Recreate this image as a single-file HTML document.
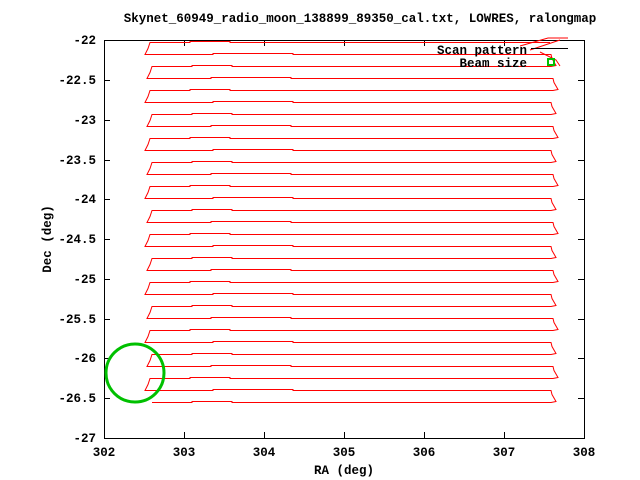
<!DOCTYPE html>
<html><head><meta charset="utf-8"><style>
html,body{margin:0;padding:0;background:#fff;width:640px;height:480px;overflow:hidden}
svg text{font-family:"Liberation Mono",monospace;font-size:12.5px;font-weight:bold;fill:#000}
</style></head><body>
<svg id="s" width="640" height="480" xmlns="http://www.w3.org/2000/svg">
<rect x="104.5" y="40.5" width="480" height="398" fill="none" stroke="#000" stroke-width="1"/>
<g stroke="#000" stroke-width="1">
<line x1="104" y1="80.5" x2="110" y2="80.5"/><line x1="104" y1="120.5" x2="110" y2="120.5"/><line x1="104" y1="160.5" x2="110" y2="160.5"/><line x1="104" y1="199.5" x2="110" y2="199.5"/><line x1="104" y1="239.5" x2="110" y2="239.5"/><line x1="104" y1="279.5" x2="110" y2="279.5"/><line x1="104" y1="319.5" x2="110" y2="319.5"/><line x1="104" y1="358.5" x2="110" y2="358.5"/><line x1="104" y1="398.5" x2="110" y2="398.5"/>
<line x1="578" y1="80.5" x2="584" y2="80.5"/><line x1="578" y1="120.5" x2="584" y2="120.5"/><line x1="578" y1="160.5" x2="584" y2="160.5"/><line x1="578" y1="199.5" x2="584" y2="199.5"/><line x1="578" y1="239.5" x2="584" y2="239.5"/><line x1="578" y1="279.5" x2="584" y2="279.5"/><line x1="578" y1="319.5" x2="584" y2="319.5"/><line x1="578" y1="358.5" x2="584" y2="358.5"/><line x1="578" y1="398.5" x2="584" y2="398.5"/>
<line x1="184.5" y1="438" x2="184.5" y2="432"/><line x1="264.5" y1="438" x2="264.5" y2="432"/><line x1="344.5" y1="438" x2="344.5" y2="432"/><line x1="424.5" y1="438" x2="424.5" y2="432"/><line x1="504.5" y1="438" x2="504.5" y2="432"/>
<line x1="184.5" y1="40" x2="184.5" y2="46"/><line x1="264.5" y1="40" x2="264.5" y2="46"/><line x1="344.5" y1="40" x2="344.5" y2="46"/><line x1="424.5" y1="40" x2="424.5" y2="46"/><line x1="504.5" y1="40" x2="504.5" y2="46"/>
</g>
<g text-anchor="end">
<text x="96" y="44">-22</text><text x="96" y="84">-22.5</text><text x="96" y="124">-23</text><text x="96" y="164">-23.5</text><text x="96" y="203">-24</text><text x="96" y="243">-24.5</text><text x="96" y="283">-25</text><text x="96" y="323">-25.5</text><text x="96" y="362">-26</text><text x="96" y="402">-26.5</text><text x="96" y="442">-27</text>
</g>
<g text-anchor="middle">
<text x="104" y="456">302</text><text x="184" y="456">303</text><text x="264" y="456">304</text><text x="344" y="456">305</text><text x="424" y="456">306</text><text x="504" y="456">307</text><text x="584" y="456">308</text>
<text x="344" y="474">RA (deg)</text>
<text x="360" y="22">Skynet_60949_radio_moon_138899_89350_cal.txt, LOWRES, ralongmap</text>
<text transform="translate(51,239) rotate(-90)">Dec (deg)</text>
</g>
<path id="p" fill="none" stroke="#f00" stroke-width="1" d=""/>
<path d="M520 46 L548 38 L568 38 M530 50 L560 40 M540 52 L556 60 L560 66" stroke="#f00" fill="none"/>
<text x="527" y="54" text-anchor="end">Scan pattern</text>
<line x1="531" y1="48.5" x2="568" y2="48.5" stroke="#000"/>
<text x="527" y="67" text-anchor="end">Beam size</text>
<rect x="548" y="59" width="6" height="6" fill="none" stroke="#00c000" stroke-width="2"/>
<circle cx="135" cy="373" r="29" fill="none" stroke="#00c000" stroke-width="3"/>
</svg>
<script>
var d="",n=31,y0=41.5,dy=12.03;
for(var i=0;i<n;i++){
 var y=Math.round(y0+i*dy)+0.5, L=150+((i*7)%4), R=550+((i*5)%4);
 if(i%2==0){
  d+=(i==0?"M":" L")+R+" "+y+" H"+(L+80)+" V"+(y-1)+" H"+(L+40)+" V"+y+" H"+L;
  if(i<n-1){var ny=Math.round(y0+(i+1)*dy)+0.5; d+=" L"+(L-2)+" "+(ny-6)+" L"+(L-5)+" "+ny;}
 } else {
  d+=" H"+(L+60)+" V"+(y-1)+" H"+(L+140)+" V"+y+" H"+R;
  if(i<n-1){var ny=Math.round(y0+(i+1)*dy)+0.5; d+=" L"+(R+1)+" "+(ny-8)+" L"+(R+5)+" "+(ny-1)+" L"+R+" "+ny;}
 }
}
document.getElementById("p").setAttribute("d",d);
</script>
</body></html>
